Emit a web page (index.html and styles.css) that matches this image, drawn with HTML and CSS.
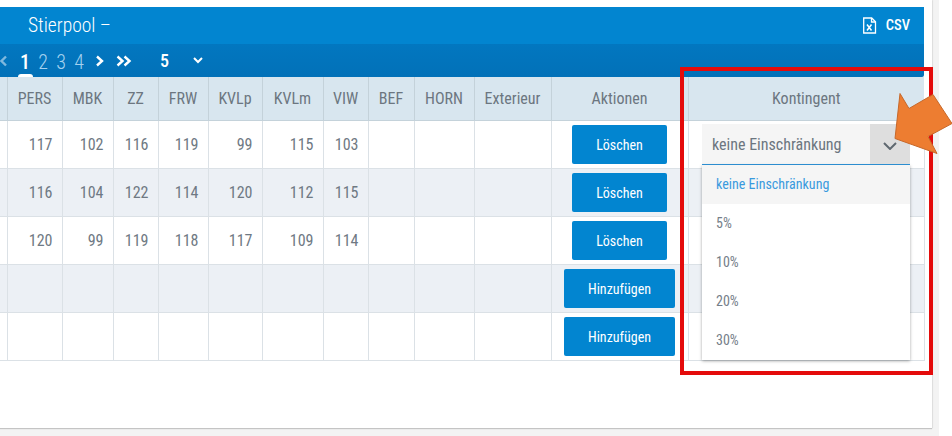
FILE: index.html
```html
<!DOCTYPE html>
<html lang="de">
<head>
<meta charset="utf-8">
<title>Stierpool</title>
<link rel="stylesheet" href="styles.css">
</head>
<body>
<div class="page">
  <main class="card">
    <section class="panel">
      <header class="titlebar">
        <h1 class="title">Stierpool –</h1>
        <a class="csv">
          <svg class="csv-icon" width="15" height="17" viewBox="0 0 15 17" fill="none" stroke="#fff" stroke-width="1.3"><path d="M1.7 1h8l3.8 3.8V16H1.700z"/><path d="M9.500 1v4h4"/><path d="M5 7.500l4.500 6M9.500 7.500l-4.500 6" stroke-width="1.500"/></svg>
          <span>CSV</span>
        </a>
      </header>
      <nav class="pager">
        <svg class="pg-back" width="16" height="12" viewBox="0 0 16 12" fill="none" stroke="#7fb8de" stroke-width="2.400"><path d="M6 1.500L1.500 6 6 10.500"/></svg>
        <span class="pg-num pg-active">1</span>
        <span class="pg-num">2</span>
        <span class="pg-num">3</span>
        <span class="pg-num">4</span>
        <svg class="pg-svg" width="10" height="12" viewBox="0 0 10 12" fill="none" stroke="#fff" stroke-width="2.400"><path d="M2 1.500l5 4.500-5 4.500"/></svg>
        <svg class="pg-svg pg-double" width="16" height="12" viewBox="0 0 16 12" fill="none" stroke="#fff" stroke-width="2.400"><path d="M1.500 1.500l5 4.500-5 4.500M8.500 1.500l5 4.500-5 4.500"/></svg>
        <span class="pg-size">5</span>
        <svg class="pg-caret" width="10" height="7" viewBox="0 0 10 7" fill="none" stroke="#fff" stroke-width="2"><path d="M1 1l4 4 4-4"/></svg>
      </nav>
      <table class="grid">
        <colgroup>
          <col class="c0"><col class="c1"><col class="c2"><col class="c3"><col class="c4"><col class="c5"><col class="c6"><col class="c7"><col class="c8"><col class="c9"><col class="c10"><col class="c11"><col class="c12">
        </colgroup>
        <thead>
          <tr><th></th><th>PERS</th><th>MBK</th><th>ZZ</th><th>FRW</th><th>KVLp</th><th>KVLm</th><th>VIW</th><th>BEF</th><th>HORN</th><th>Exterieur</th><th>Aktionen</th><th>Kontingent</th></tr>
        </thead>
        <tbody>
          <tr><td></td><td class="num">117</td><td class="num">102</td><td class="num">116</td><td class="num">119</td><td class="num">99</td><td class="num">115</td><td class="num">103</td><td></td><td></td><td></td><td class="act"><button class="btn btn-del">Löschen</button></td><td></td></tr>
          <tr><td></td><td class="num">116</td><td class="num">104</td><td class="num">122</td><td class="num">114</td><td class="num">120</td><td class="num">112</td><td class="num">115</td><td></td><td></td><td></td><td class="act"><button class="btn btn-del">Löschen</button></td><td></td></tr>
          <tr><td></td><td class="num">120</td><td class="num">99</td><td class="num">119</td><td class="num">118</td><td class="num">117</td><td class="num">109</td><td class="num">114</td><td></td><td></td><td></td><td class="act"><button class="btn btn-del">Löschen</button></td><td></td></tr>
          <tr><td></td><td></td><td></td><td></td><td></td><td></td><td></td><td></td><td></td><td></td><td></td><td class="act"><button class="btn btn-add">Hinzufügen</button></td><td></td></tr>
          <tr><td></td><td></td><td></td><td></td><td></td><td></td><td></td><td></td><td></td><td></td><td></td><td class="act"><button class="btn btn-add">Hinzufügen</button></td><td></td></tr>
        </tbody>
      </table>
    </section>
  </main>
  <div class="select">
    <div class="select-field">
      <span class="select-value">keine Einschränkung</span>
      <span class="select-toggle"><svg class="toggle-icon" width="14" height="8" viewBox="0 0 14 8" fill="none" stroke="#5f6870" stroke-width="2"><path d="M1 1l6 6 6-6"/></svg></span>
    </div>
    <ul class="menu">
      <li class="opt opt-on">keine Einschränkung</li>
      <li class="opt">5%</li>
      <li class="opt">10%</li>
      <li class="opt">20%</li>
      <li class="opt">30%</li>
    </ul>
  </div>
  <div class="redbox"></div>
  <svg class="arrow" width="60" height="70" viewBox="0 0 60 70"><path d="M8 1.500L17 16.500 41 2.500 60 31.500 36 44.500 45 61.500 3 46.500z" fill="#ed7d31" stroke="#c7682a" stroke-width="1"/></svg>
</div>
</body>
</html>
```
FILE: styles.css
```css
* { box-sizing: border-box; }
html, body { margin: 0; padding: 0; background: #fff; }
body { width: 952px; height: 436px; overflow: hidden; font-family: "Roboto Condensed", "Roboto", "Liberation Sans Narrow", sans-serif; font-stretch: 75%; color: #5f6b75; }
.page { position: relative; width: 939px; height: 436px; background: #f3f3f3; }
.card { width: 932px; height: 428px; padding: 7px 8px 0 0; background: #fff; box-shadow: 0 1px 1px #c4c4c4, 1px 0 1px #e4e4e4; }
.panel { width: 924px; }
.titlebar { height: 37px; display: flex; align-items: center; justify-content: space-between; padding: 0 14px 0 28px; background: #0285d0; color: #fff; }
.title { margin: 0; font-size: 19.5px; font-weight: 300; }
.csv { display: flex; align-items: center; gap: 9px; font-size: 14.500px; font-weight: 500; }
.csv-icon { display: block; }
.pager { height: 33px; display: flex; align-items: center; background: linear-gradient(#0277c0, #0271b8); color: #fff; border-bottom-right-radius: 2px; }
.pg-back { margin-top: 1px; }
.pg-num { position: relative; width: 18px; height: 33px; text-align: center; font-size: 20px; line-height: 36px; font-weight: 300; color: #a5d2ef; }
.pg-active { color: #fff; font-weight: 500; }
.pg-active::after { content: ""; position: absolute; left: 2px; bottom: 0; width: 15px; height: 3px; background: #fff; border-radius: 3px 3px 0 0; }
.pg-svg { margin-left: 7px; }
.pg-double { margin-left: 11px; }
.pg-size { margin-left: 28px; font-size: 18px; font-weight: 500; }
.pg-caret { margin-left: 24px; }
.grid { width: 924px; table-layout: fixed; border-collapse: collapse; font-size: 16px; }
.c0 { width: 7px; } .c1 { width: 55px; } .c2 { width: 51px; } .c3 { width: 45px; } .c4 { width: 50px; } .c5 { width: 54px; } .c6 { width: 61px; } .c7 { width: 45px; } .c8 { width: 46px; } .c9 { width: 60px; } .c10 { width: 77px; } .c11 { width: 137px; } .c12 { width: 236px; }
th, td { padding: 0; border: 1px solid #dbe1e6; }
th { height: 43px; background: #d8e6ef; border-color: #c4d2da; border-top: 0; font-weight: 400; color: #6c7680; text-align: center; }
th:first-child, td:first-child { border-left: 0; }
th:last-child { border-right: 0; }
td { color: #6f7983; }
tbody tr { height: 48px; }
tbody tr:nth-child(2), tbody tr:nth-child(4) { background: #ecf0f5; }
.num { text-align: right; padding-right: 9px; }
.act { text-align: center; }
.btn { display: block; height: 39px; margin: 0 auto; padding: 2px 0 0; border: 0; border-radius: 2px; background: #0285d0; color: #fff; font: inherit; font-size: 14px; font-weight: 400; }
.btn-del { width: 95px; }
.btn-add { width: 111px; }
.select { position: absolute; left: 702px; top: 124px; width: 208px; }
.select-field { height: 41px; display: flex; align-items: center; justify-content: space-between; background: #f5f5f5; border-bottom: 1px solid #2f96dc; font-size: 16px; color: #6c7680; }
.select-value { padding-left: 10px; }
.select-toggle { width: 40px; height: 40px; display: flex; align-items: center; justify-content: center; background: #dedede; }
.toggle-icon { margin-top: 3px; }
.menu { list-style: none; margin: 0; padding: 0; background: #fff; box-shadow: 0 1px 3px rgba(0,0,0,.35); }
.opt { height: 39px; display: flex; align-items: center; padding: 0 0 2px 14px; font-size: 14px; color: #757e88; }
.opt-on { background: #f5f5f5; color: #3a9ade; }
.redbox { position: absolute; left: 680px; top: 67px; width: 253px; height: 308px; border: 4px solid #e40b0b; }
.arrow { position: absolute; left: 892px; top: 92px; }
```
